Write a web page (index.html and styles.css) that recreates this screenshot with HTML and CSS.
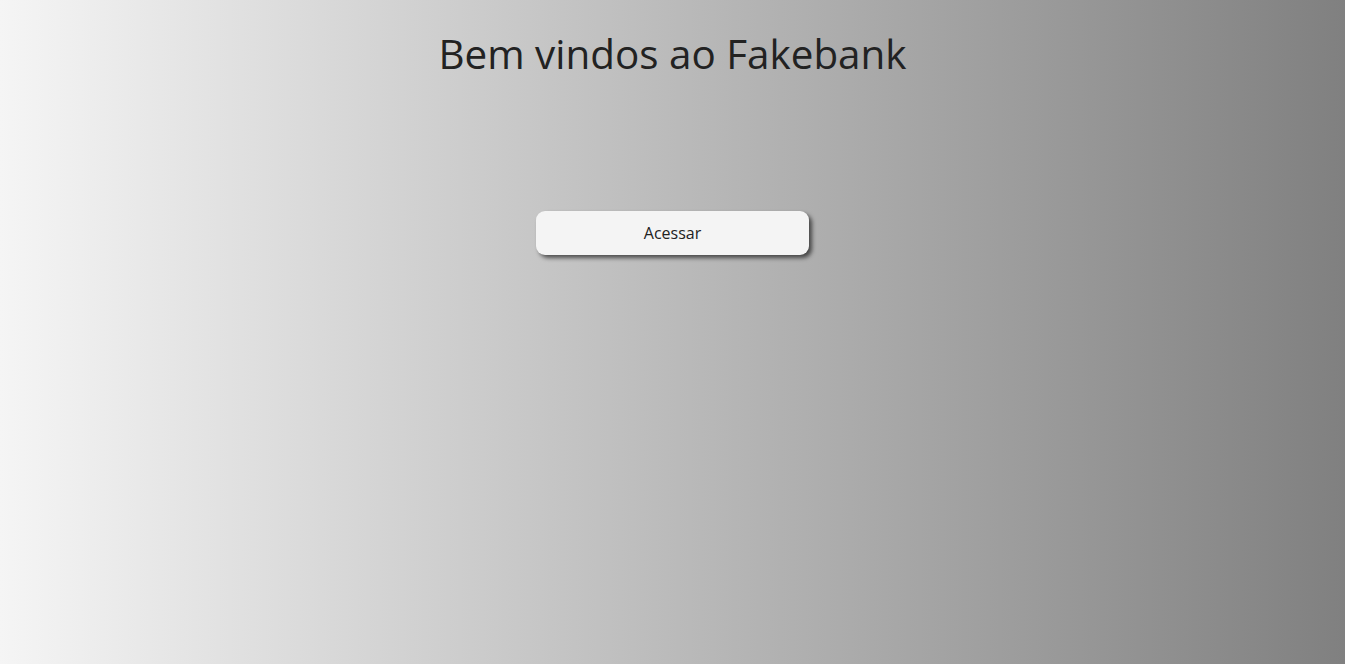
FILE: index.html
```html
<!DOCTYPE html>
<html lang="pt-BR">
<head>
<meta charset="utf-8">
<title>Fakebank</title>
<link rel="stylesheet" href="styles.css">
</head>
<body>
<main class="home">
  <h1 class="home-title">Bem vindos ao Fakebank</h1>
  <button class="access-btn" type="button">Acessar</button>
</main>
</body>
</html>
```

FILE: styles.css
```css
html, body {
  margin: 0;
  padding: 0;
  height: 100%;
}
body {
  background: linear-gradient(to right, #f5f5f5, #808080);
  font-family: "Open Sans", "Liberation Sans", sans-serif;
  color: #222;
}
.home {
  display: flex;
  flex-direction: column;
  align-items: center;
  padding-top: 27px;
}
.home-title {
  margin: 0;
  font-size: 40.4px;
  font-weight: 400;
  line-height: 54px;
  color: #222;
}
.access-btn {
  margin-top: 130px;
  width: 273px;
  height: 44px;
  border: none;
  border-radius: 9px;
  background: #f4f4f4;
  box-shadow: 3px 3px 4px rgba(0, 0, 0, 0.6);
  font-family: "Open Sans", "Liberation Sans", sans-serif;
  font-size: 16px;
  color: #222;
  cursor: pointer;
}
```
